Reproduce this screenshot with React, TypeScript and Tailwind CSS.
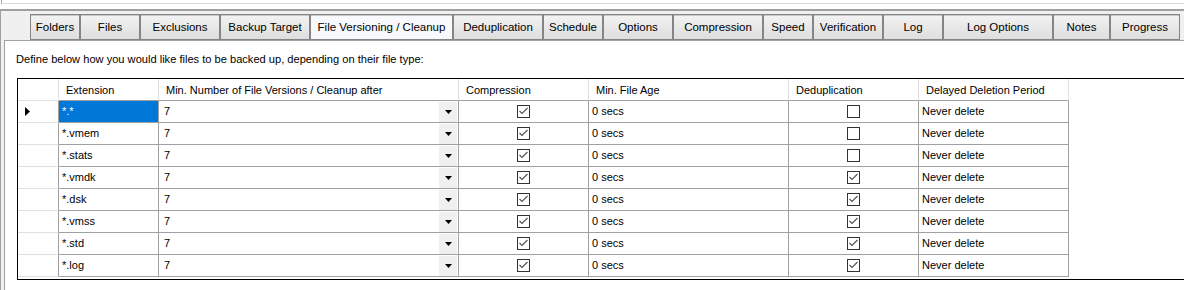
import React from "react";

type Tab = { name: string; w: string; active?: boolean };

const tabs: Tab[] = [
  { name: "Folders", w: "w-[50px]" },
  { name: "Files", w: "w-[60px]" },
  { name: "Exclusions", w: "w-[80px]" },
  { name: "Backup Target", w: "w-[90px]" },
  { name: "File Versioning / Cleanup", w: "w-[143px]", active: true },
  { name: "Deduplication", w: "w-[90px]" },
  { name: "Schedule", w: "w-[60px]" },
  { name: "Options", w: "w-[70px]" },
  { name: "Compression", w: "w-[90px]" },
  { name: "Speed", w: "w-[50px]" },
  { name: "Verification", w: "w-[70px]" },
  { name: "Log", w: "w-[60px]" },
  { name: "Log Options", w: "w-[110px]" },
  { name: "Notes", w: "w-[57px]" },
  { name: "Progress", w: "w-[70px]" },
];

const rows = [
  { ext: "*.*", dedup: false },
  { ext: "*.vmem", dedup: false },
  { ext: "*.stats", dedup: false },
  { ext: "*.vmdk", dedup: true },
  { ext: "*.dsk", dedup: true },
  { ext: "*.vmss", dedup: true },
  { ext: "*.std", dedup: true },
  { ext: "*.log", dedup: true },
];

const CheckBox = ({ checked }: { checked: boolean }) => (
  <svg width="13" height="13" viewBox="0 0 13 13">
    <rect x="0.5" y="0.5" width="12" height="12" fill="#fff" stroke="#333" />
    {checked && (
      <path d="M2.5 6 L5 8.5 L10.5 3" fill="none" stroke="#505050" strokeWidth="1.1" />
    )}
  </svg>
);

const DropArrow = () => (
  <svg width="7" height="4" viewBox="0 0 7 4">
    <path d="M0 0 H7 L3.5 4 Z" fill="#000" />
  </svg>
);

export default function App() {
  return (
    <div className="w-[1184px] h-[290px] overflow-hidden bg-white text-black font-['Liberation_Sans',Arial,sans-serif] text-[11px] flex flex-col">
      {/* strip of the control above */}
      <div className="h-[4px] ml-px border-l border-b border-l-[#a0a0a0] border-b-[#dadada]" />
      <div className="h-[5px]" />

      <div className="flex-1 flex flex-col bg-[#f0f0f0] border-t-2 border-l border-t-[#a0a0a0] border-l-[#a0a0a0]">
        {/* tab strip */}
        <div className="h-[29px] flex items-end pl-[29px]">
          {tabs.map((t) => (
            <div
              key={t.name}
              className={`${t.w} h-[26px] pt-px flex items-center justify-center border border-[#858585] shadow-[inset_0_1px_0_#c8c8c8] whitespace-nowrap text-[11.5px] ${
                t.active ? "bg-[#f7f9fc]" : "bg-linear-to-b from-[#f3f3f3] to-[#dedede]"
              }`}
            >
              {t.name}
            </div>
          ))}
        </div>

        {/* tab page */}
        <div className="flex-1 ml-[3px] bg-white border-t border-l border-[#a0a0a0] flex flex-col">
          <p className="pl-[11px] pt-[12px] leading-[13px] text-[11.1px]">
            Define below how you would like files to be backed up, depending on their file type:
          </p>

          <div className="mt-[12px] ml-[12px] h-[202px] border border-r-0 border-black flex flex-col">
            {/* header */}
            <div className="h-[22px] flex shrink-0">
              <div className="w-[41px] border-r border-b border-[#e0e0e0]" />
              {[
                ["Extension", "w-[100px]"],
                ["Min. Number of File Versions / Cleanup after", "w-[300px]"],
                ["Compression", "w-[130px]"],
                ["Min. File Age", "w-[200px]"],
                ["Deduplication", "w-[130px]"],
                ["Delayed Deletion Period", "w-[150px]"],
              ].map(([label, w]) => (
                <div
                  key={label}
                  className={`${w} pt-px border-r border-r-[#e0e0e0] border-b border-b-[#a0a0a0] pl-[7px] flex items-center whitespace-nowrap`}
                >
                  {label}
                </div>
              ))}
            </div>

            {rows.map((r, i) => (
              <div key={r.ext} className="h-[22px] flex shrink-0">
                <div className="w-[41px] border-r border-r-[#a0a0a0] border-b border-b-[#e0e0e0] flex items-center pl-[7px]">
                  {i === 0 && (
                    <svg width="5" height="9" viewBox="0 0 5 9">
                      <path d="M0 0 L5 4.5 L0 9 Z" fill="#000" />
                    </svg>
                  )}
                </div>
                <div className="w-[100px] border-r border-b border-[#a0a0a0] flex">
                  <div
                    className={`flex-1 flex items-center pl-[3px] ${
                      i === 0 ? "bg-[#0078d7] text-white" : ""
                    }`}
                  >
                    {r.ext}
                  </div>
                </div>
                <div className="w-[300px] border-r border-b border-[#a0a0a0] flex items-center pl-[5px] pr-px">
                  <span className="flex-1">7</span>
                  <div className="w-[18px] h-[20px] bg-[#f0f0f0] flex items-center justify-center">
                    <DropArrow />
                  </div>
                </div>
                <div className="w-[130px] border-r border-b border-[#a0a0a0] flex items-center justify-center">
                  <CheckBox checked />
                </div>
                <div className="w-[200px] border-r border-b border-[#a0a0a0] flex items-center pl-[3px]">
                  0 secs
                </div>
                <div className="w-[130px] border-r border-b border-[#a0a0a0] flex items-center justify-center">
                  <CheckBox checked={r.dedup} />
                </div>
                <div className="w-[150px] border-r border-b border-[#a0a0a0] flex items-center pl-[3px]">
                  Never delete
                </div>
              </div>
            ))}
          </div>
        </div>
      </div>
    </div>
  );
}
